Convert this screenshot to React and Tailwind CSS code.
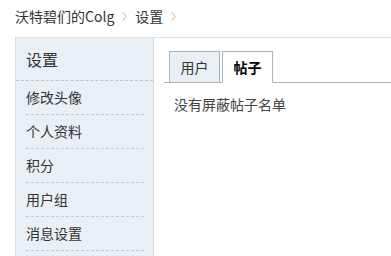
import React from "react";

const menu = ["修改头像", "个人资料", "积分", "用户组", "消息设置"];

const Arrow = () => (
  <svg className="mx-[8px] h-[9px] w-[5px] text-[#b5b5b5]" viewBox="0 0 5 9" fill="none">
    <path d="M0.8 0.5 L4.2 4.5 L0.8 8.5" stroke="currentColor" strokeWidth="1" />
  </svg>
);

export default function App() {
  return (
    <div className="h-[256px] w-[391px] overflow-hidden bg-white font-['Microsoft_YaHei','Noto_Sans_CJK_SC',sans-serif] text-[14px] text-[#333]">
      <div className="flex h-[37px] items-start pl-[15px] pt-[6px] leading-5">
        <span>沃特碧们的Colg</span>
        <span className="flex h-5 items-center">
          <Arrow />
        </span>
        <span>设置</span>
        <span className="flex h-5 items-center">
          <Arrow />
        </span>
      </div>

      <div className="ml-[15px] flex w-[420px] border-t border-[#dde3e8]">
        <div className="h-[240px] w-[139px] shrink-0 border-x border-[#d4dde4] bg-[#e8eff5]">
          <h2 className="flex h-[43px] items-center border-b border-dashed border-[#bcc6ce] pl-[10px] text-[16px] font-normal">
            设置
          </h2>
          <ul className="ml-[10px] mr-[9px]">
            {menu.map((item) => (
              <li
                key={item}
                className="flex h-[34px] items-center border-b border-dashed border-[#c4ccd3]"
              >
                {item}
              </li>
            ))}
          </ul>
        </div>

        <div className="flex-1 pl-[10px] pt-[13px]">
          <ul className="flex h-[32px] border-b border-[#a9b4bd] pl-[5px] leading-[30px]">
            <li className="mr-[2px] h-[32px] w-[51px] border border-[#a9b4bd] bg-[#e8eff5] text-center">
              用户
            </li>
            <li className="h-[32px] w-[51px] border border-[#a9b4bd] border-b-white bg-white text-center font-bold text-black">
              帖子
            </li>
          </ul>
          <p className="mt-[11px] pl-[10px] leading-5 text-[#444]">没有屏蔽帖子名单</p>
        </div>
      </div>
    </div>
  );
}
